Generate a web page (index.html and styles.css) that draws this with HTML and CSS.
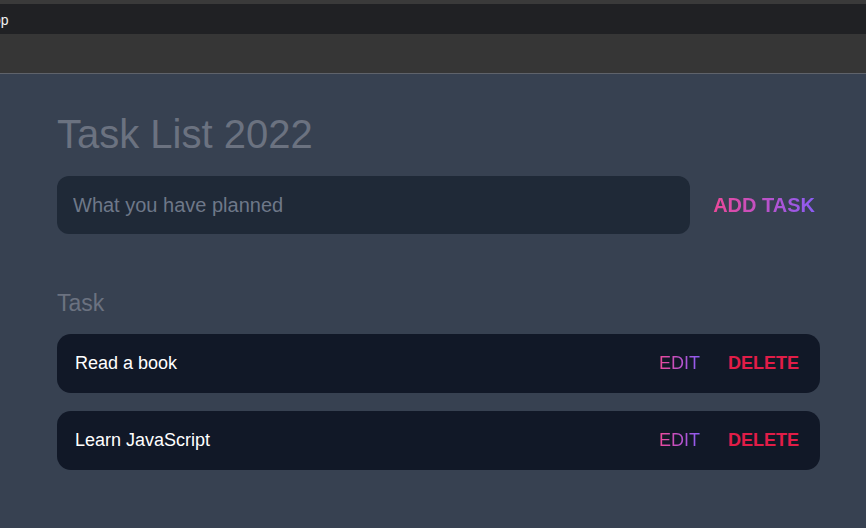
FILE: index.html
```html
<!DOCTYPE html>
<html lang="en">
<head>
<meta charset="utf-8">
<title>Task List 2022</title>
<link rel="stylesheet" href="styles.css">
</head>
<body>
<div class="chrome">
  <div class="chrome-top"></div>
  <div class="chrome-tabs"><span class="tab-title">op</span></div>
  <div class="chrome-toolbar"></div>
</div>
<main class="app">
  <h1 class="title">Task List 2022</h1>
  <form class="add-form">
    <input class="add-input" type="text" placeholder="What you have planned">
    <button class="add-btn" type="button"><span class="grad">ADD TASK</span></button>
  </form>
  <h2 class="section">Task</h2>
  <ul class="tasks">
    <li class="task">
      <span class="task-text">Read a book</span>
      <div class="actions">
        <button class="edit" type="button"><span class="grad">EDIT</span></button>
        <button class="delete" type="button">DELETE</button>
      </div>
    </li>
    <li class="task">
      <span class="task-text">Learn JavaScript</span>
      <div class="actions">
        <button class="edit" type="button"><span class="grad">EDIT</span></button>
        <button class="delete" type="button">DELETE</button>
      </div>
    </li>
  </ul>
</main>
</body>
</html>
```
FILE: styles.css
```css
* { box-sizing: border-box; }
html, body { margin: 0; padding: 0; }
body {
  background: #374151;
  font-family: "Liberation Sans", Arial, sans-serif;
  height: 528px;
  overflow: hidden;
}
.chrome-top { height: 4px; background: #3a3a3a; }
.chrome-tabs {
  height: 30px;
  background: #202124;
  display: flex;
  align-items: center;
  overflow: hidden;
}
.tab-title {
  color: #f1f1f1;
  font-size: 14px;
  margin-left: -7px;
  margin-top: 1px;
}
.chrome-toolbar {
  height: 40px;
  background: #363636;
  border-bottom: 1px solid #5f636b;
}
.app {
  padding: 38px 46px 0 57px;
}
.title {
  margin: 0;
  font-size: 40px;
  line-height: 44px;
  font-weight: 400;
  color: #6b7280;
}
.add-form {
  margin-top: 20px;
  display: flex;
  align-items: center;
  gap: 18px;
}
.add-input {
  flex: 1;
  height: 58px;
  border: none;
  outline: none;
  border-radius: 12px;
  background: #1f2937;
  padding: 0 16px;
  font-family: inherit;
  font-size: 20px;
  color: #e5e7eb;
}
.add-input::placeholder { color: #6e7889; }
.add-btn {
  background: none;
  border: none;
  padding: 0 5px;
  font-family: inherit;
  font-size: 20px;
  font-weight: 700;
  cursor: pointer;
}
.grad {
  background: linear-gradient(90deg, #ec4899, #8b5cf6);
  -webkit-background-clip: text;
  background-clip: text;
  color: transparent;
}
.section {
  margin: 55px 0 0;
  font-size: 23px;
  line-height: 28px;
  font-weight: 400;
  color: #6b7280;
}
.tasks {
  list-style: none;
  margin: 17px 0 0;
  padding: 0;
  display: flex;
  flex-direction: column;
  gap: 18px;
}
.task {
  height: 59px;
  background: #111827;
  border-radius: 14px;
  display: flex;
  align-items: center;
  justify-content: space-between;
  padding: 0 21px 0 18px;
}
.task-text {
  color: #ffffff;
  font-size: 18px;
}
.actions {
  display: flex;
  align-items: center;
  gap: 28px;
}
.edit, .delete {
  background: none;
  border: none;
  padding: 0;
  font-family: inherit;
  font-size: 18px;
  cursor: pointer;
}
.edit { font-weight: 400; }
.delete { font-weight: 700; color: #e11d48; }
```
